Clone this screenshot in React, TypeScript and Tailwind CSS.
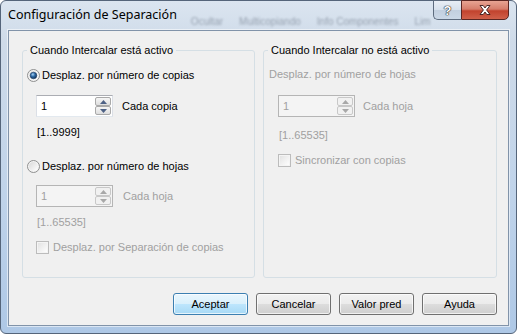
import React from "react";

function Radio({ checked, disabled }: { checked?: boolean; disabled?: boolean }) {
  return (
    <svg width="13" height="13" viewBox="0 0 13 13" className="shrink-0">
      <defs>
        <linearGradient id="rg-ring" x1="0" y1="0" x2="1" y2="1">
          <stop offset="0" stopColor="#d9d9d9" />
          <stop offset="1" stopColor="#ffffff" />
        </linearGradient>
        <radialGradient id="rg-dot" cx="0.4" cy="0.35" r="0.7">
          <stop offset="0" stopColor="#a9d4f5" />
          <stop offset="0.45" stopColor="#2e6aa6" />
          <stop offset="1" stopColor="#0f2d52" />
        </radialGradient>
      </defs>
      <circle cx="6.5" cy="6.5" r="6" fill="#f4f4f4" stroke={disabled ? "#bcbcbc" : "#8e8f8f"} strokeWidth="1" />
      <circle cx="6.5" cy="6.5" r="4.5" fill="url(#rg-ring)" />
      {checked && <circle cx="6.5" cy="6.5" r="3.3" fill="url(#rg-dot)" stroke="#1b3b63" strokeWidth="0.6" />}
    </svg>
  );
}

function Check({ disabled }: { disabled?: boolean }) {
  return (
    <div
      className={`w-[13px] h-[13px] shrink-0 border ${
        disabled ? "border-[#bcbcbc] bg-[#f4f4f4]" : "border-[#8e8f8f] bg-white"
      } p-[1px]`}
    >
      <div className="w-full h-full bg-[linear-gradient(135deg,#e3e3e3,#fdfdfd)]" />
    </div>
  );
}

function Arrow({ up, disabled }: { up?: boolean; disabled?: boolean }) {
  const color = disabled ? "#a8a8a8" : "#4d6185";
  return (
    <svg width="7" height="4" viewBox="0 0 7 4">
      {up ? <polygon points="0,4 7,4 3.5,0" fill={color} /> : <polygon points="0,0 7,0 3.5,4" fill={color} />}
    </svg>
  );
}

function Spin({ disabled }: { disabled?: boolean }) {
  return (
    <div
      className={`flex h-[22px] w-[77px] shrink-0 border p-[1px] ${
        disabled
          ? "border-[#b5b5b5] bg-[#f4f4f4] text-[#a0a0a0]"
          : "border-[#abadb3] border-x-[#dbdfe6] border-b-[#e3e9ef] bg-white text-black"
      }`}
    >
      <div className="flex-1 pl-[3px] leading-[18px]">1</div>
      <div className="flex flex-col w-[16px] h-[18px]">
        {[true, false].map((up) => (
          <div
            key={String(up)}
            className={`flex-1 flex items-center justify-center border rounded-[2px] ${
              disabled
                ? "border-[#c8c8c8] bg-[#f1f1f1]"
                : "border-[#a9a9a9] bg-[linear-gradient(to_bottom,#f6f6f6,#dedede)]"
            }`}
          >
            <Arrow up={up} disabled={disabled} />
          </div>
        ))}
      </div>
    </div>
  );
}

function Btn({ label, def }: { label: string; def?: boolean }) {
  return (
    <div
      className={`w-[75px] h-[22px] rounded-[3px] border flex items-center justify-center text-black ${
        def
          ? "border-[#3c7fb1] bg-[linear-gradient(to_bottom,#eaf6fd_0%,#d9f0fc_50%,#bee6fd_50%,#a7d9f5_100%)] shadow-[inset_0_0_0_1px_rgba(255,255,255,0.7)]"
          : "border-[#707070] bg-[linear-gradient(to_bottom,#f2f2f2_0%,#ebebeb_50%,#dddddd_50%,#cfcfcf_100%)] shadow-[inset_0_0_0_1px_rgba(255,255,255,0.7)]"
      }`}
    >
      {label}
    </div>
  );
}

export default function App() {
  return (
    <div className="w-[517px] h-[334px] overflow-hidden bg-white font-['Liberation_Sans',Arial,sans-serif] text-[11px]">
      <div className="w-full h-full flex flex-col rounded-[6px] border border-[#55657a] bg-[linear-gradient(to_bottom,#dbe5f0_0%,#cfdbe9_12%,#bfd3ea_60%,#aec8e6_100%)]">
        {/* Title bar */}
        <div className="h-[29px] flex items-start relative">
          <div className="pl-[7px] pt-[6px] text-[12.5px] text-black leading-[16px] font-['Noto_Sans',Arial,sans-serif] whitespace-nowrap">
            Configuración de Separación
          </div>
          <div className="flex-1 min-w-0 overflow-hidden whitespace-nowrap flex gap-[16px] pl-[14px] pt-[13px] text-[10px] text-[#6c7786] blur-[1.3px] opacity-60">
            <span>Ocultar</span>
            <span>Multicopiando</span>
            <span>Info Componentes</span>
            <span>Lim</span>
          </div>
          <div className="flex shrink-0 mr-[7px] -mt-[1px]">
            <div className="w-[28px] h-[20px] rounded-bl-[5px] border border-[#5d6b7e] border-r-0 bg-[linear-gradient(to_bottom,#e8eef5_0%,#d6e0ec_50%,#c2cfdf_50%,#cbd8e7_100%)] flex items-center justify-center">
              <span className="font-bold text-[13px] leading-none text-white [text-shadow:0_0_1px_#222,0_0_1px_#222,0_0_1px_#222]">
                ?
              </span>
            </div>
            <div className="w-[48px] h-[20px] rounded-br-[5px] border border-[#5a2622] bg-[linear-gradient(to_bottom,#e8a493_0%,#d67d6b_45%,#c2432e_55%,#d0604a_100%)] flex items-center justify-center">
              <svg width="14" height="12" viewBox="0 0 14 12">
                <path
                  d="M2 1.5 L5.2 1.5 L7 4 L8.8 1.5 L12 1.5 L8.6 6 L12 10.5 L8.8 10.5 L7 8 L5.2 10.5 L2 10.5 L5.4 6 Z"
                  fill="#ffffff"
                  stroke="#3a1a18"
                  strokeWidth="0.9"
                  strokeLinejoin="round"
                />
              </svg>
            </div>
          </div>
        </div>

        {/* Client area */}
        <div className="mx-[7px] h-[296px] border border-[#8193a9] shadow-[0_0_0_1px_rgba(255,255,255,0.55)] bg-[#f0f0f0] pl-[13px] pr-[11px] pt-[11px] flex flex-col">
          <div className="flex gap-[8px]">
            {/* Left group */}
            <fieldset className="w-[233px] h-[236px] border border-[#d5dfe5] rounded-[3px] flex flex-col">
              <legend className="ml-[4px] px-[3px] h-[16px] leading-[16px] text-black">
                Cuando Intercalar está activo
              </legend>
              <div className="flex flex-col text-black">
                <div className="mt-[9px] ml-[4px] h-[16px] flex items-center">
                  <Radio checked />
                  <span className="ml-[2px]">Desplaz. por número de copias</span>
                </div>
                <div className="mt-[12px] ml-[13px] flex items-center">
                  <Spin />
                  <span className="ml-[9px]">Cada copia</span>
                </div>
                <div className="mt-[7px] ml-[14px] h-[16px] leading-[16px]">[1..9999]</div>
                <div className="mt-[18px] ml-[4px] h-[16px] flex items-center">
                  <Radio />
                  <span className="ml-[2px]">Desplaz. por número de hojas</span>
                </div>
                <div className="mt-[11px] ml-[13px] flex items-center text-[#a0a0a0]">
                  <Spin disabled />
                  <span className="ml-[10px]">Cada hoja</span>
                </div>
                <div className="mt-[7px] ml-[14px] h-[16px] leading-[16px] text-[#a0a0a0]">[1..65535]</div>
                <div className="mt-[9px] ml-[13px] h-[16px] flex items-center text-[#a0a0a0]">
                  <Check disabled />
                  <span className="ml-[4px]">Desplaz. por Separación de copias</span>
                </div>
              </div>
            </fieldset>

            {/* Right group */}
            <fieldset className="w-[234px] h-[236px] border border-[#d5dfe5] rounded-[3px] flex flex-col">
              <legend className="ml-[4px] px-[3px] h-[16px] leading-[16px] text-black">
                Cuando Intercalar no está activo
              </legend>
              <div className="flex flex-col text-[#a0a0a0]">
                <div className="mt-[8px] ml-[5px] h-[16px] leading-[16px]">Desplaz. por número de hojas</div>
                <div className="mt-[13px] ml-[14px] flex items-center">
                  <Spin disabled />
                  <span className="ml-[8px]">Cada hoja</span>
                </div>
                <div className="mt-[10px] ml-[15px] h-[16px] leading-[16px]">[1..65535]</div>
                <div className="mt-[9px] ml-[14px] h-[16px] flex items-center">
                  <Check disabled />
                  <span className="ml-[4px]">Sincronizar con copias</span>
                </div>
              </div>
            </fieldset>
          </div>

          <div className="mt-[15px] flex justify-end gap-[8px]">
            <Btn label="Aceptar" def />
            <Btn label="Cancelar" />
            <Btn label="Valor pred" />
            <Btn label="Ayuda" />
          </div>
        </div>
      </div>
    </div>
  );
}
